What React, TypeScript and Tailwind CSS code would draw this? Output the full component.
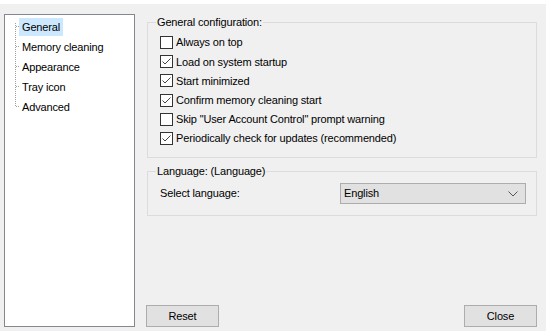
import React from "react";

const treeItems = ["General", "Memory cleaning", "Appearance", "Tray icon", "Advanced"];

const options = [
  { label: "Always on top", checked: false },
  { label: "Load on system startup", checked: true },
  { label: "Start minimized", checked: true },
  { label: "Confirm memory cleaning start", checked: true },
  { label: 'Skip "User Account Control" prompt warning', checked: false },
  { label: "Periodically check for updates (recommended)", checked: true },
];

const Checkbox = ({ checked }: { checked: boolean }) => (
  <span className="w-[13px] h-[13px] border border-[#333333] bg-white flex items-center justify-center shrink-0">
    {checked && (
      <svg width="11" height="11" viewBox="0 0 11 11">
        <polyline points="1.5,5.5 4,8 9.5,2.5" fill="none" stroke="#444" strokeWidth="1" />
      </svg>
    )}
  </span>
);

const Button = ({ label }: { label: string }) => (
  <button className="w-[73px] h-[22px] bg-[#e1e1e1] border border-[#adadad] text-black">
    {label}
  </button>
);

export default function App() {
  return (
    <div
      className="w-[546px] h-[331px] bg-white flex flex-col text-[11px] tracking-[-0.15px] text-black"
      style={{ fontFamily: '"Liberation Sans", Arial, sans-serif' }}
    >
      <div className="h-[4px] bg-white" />
      <div className="flex-1 bg-[#f0f0f0] flex pl-[4px] pb-[4px]">
        {/* tree view */}
        <div className="mt-[10px] w-[131px] bg-white border border-[#828790] flex">
          <svg width="14" height="110" className="shrink-0">
            <g stroke="#a0a0a0" strokeWidth="1" strokeDasharray="1 1" shapeRendering="crispEdges">
              <line x1="10.5" y1="8" x2="10.5" y2="92" />
              {[11, 31, 51, 71, 91].map((y) => (
                <line key={y} x1="11" y1={y + 0.5} x2="14" y2={y + 0.5} />
              ))}
            </g>
          </svg>
          <ul className="pt-[2px]">
            {treeItems.map((item, i) => (
              <li key={item} className="h-[20px] flex items-center">
                <span className={`px-[3px] leading-[18px] ${i === 0 ? "bg-[#cce8ff]" : ""}`}>
                  {item}
                </span>
              </li>
            ))}
          </ul>
        </div>

        {/* settings pane */}
        <div className="ml-[11px] mt-[10px] w-[391px] flex flex-col">
          <fieldset className="ml-[1px] border border-[#dcdcdc] pl-[8px] pr-[8px] pb-[8px] h-[144px]">
            <legend className="px-[1px] leading-[16px]">General configuration:</legend>
            <div className="pl-[4px] pt-[3px] flex flex-col">
              {options.map((o) => (
                <label key={o.label} className="h-[19.2px] flex items-center gap-[3px]">
                  <Checkbox checked={o.checked} />
                  <span>{o.label}</span>
                </label>
              ))}
            </div>
          </fieldset>

          <fieldset className="ml-[1px] mt-[5px] border border-[#dcdcdc] pl-[8px] pr-[10px] h-[53px]">
            <legend className="px-[1px] leading-[16px]">Language: (Language)</legend>
            <div className="flex items-center justify-between pl-[4px] pt-[4px]">
              <span>Select language:</span>
              <div className="w-[186px] h-[21px] bg-[#e1e1e1] border border-[#adadad] flex items-center justify-between pl-[3px] pr-[7px]">
                <span>English</span>
                <svg width="10" height="6" viewBox="0 0 10 6">
                  <polyline points="0.5,0.5 5,5 9.5,0.5" fill="none" stroke="#555" strokeWidth="1" />
                </svg>
              </div>
            </div>
          </fieldset>

          <div className="mt-auto flex justify-between">
            <Button label="Reset" />
            <Button label="Close" />
          </div>
        </div>
      </div>
    </div>
  );
}
